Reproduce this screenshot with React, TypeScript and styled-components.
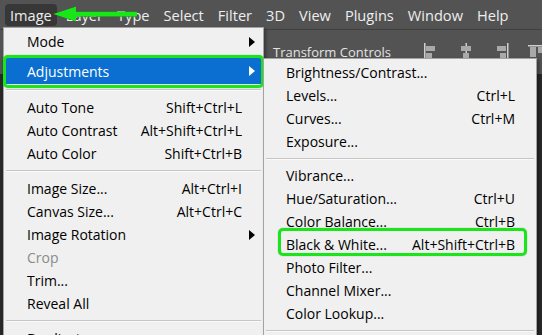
import React from "react";
import styled, { createGlobalStyle } from "styled-components";

const GlobalStyle = createGlobalStyle`
  html, body {
    margin: 0;
    padding: 0;
    background: #535353;
  }
  body {
    font-family: "Open Sans", "Noto Sans", sans-serif;
  }
`;

const GREEN = "#19e619";

const Screen = styled.div`
  position: relative;
  width: 542px;
  height: 335px;
  overflow: hidden;
  background: #535353;
  display: flex;
  flex-direction: column;
`;

const MenuBar = styled.div`
  height: 30px;
  box-sizing: border-box;
  display: flex;
  align-items: center;
  padding-left: 5px;
  gap: 4px;
  border-bottom: 1px solid #404040;
`;

const MenuTitle = styled.div<{ $active?: boolean }>`
  height: 22px;
  line-height: 22px;
  padding: 0 5px;
  border-radius: 4px;
  color: #eeeeee;
  font-size: 14.6px;
  background: ${({ $active }) => ($active ? "#373737" : "transparent")};
`;

const OptionsBar = styled.div`
  height: 44px;
  display: flex;
  align-items: center;
  padding-left: 273px;
  color: #e4e4e4;
  font-size: 13px;
  white-space: nowrap;
`;

const Divider = styled.div`
  width: 1px;
  height: 24px;
  background: #3a3a3a;
  margin: 0 20px 0 12px;
`;

const AlignIcons = styled.div`
  display: flex;
  gap: 19px;
`;

const Workspace = styled.div`
  flex: 1;
  background: #282828;
`;

const Menu = styled.div<{ $left: number; $top: number; $width: number }>`
  position: absolute;
  left: ${({ $left }) => $left}px;
  top: ${({ $top }) => $top}px;
  width: ${({ $width }) => $width}px;
  background: #f0f0f0;
  border: 1px solid #a3a3a3;
  padding: 2px 0;
  box-shadow: 2px 2px 3px rgba(0, 0, 0, 0.35);
  font-size: 14px;
  color: #000;
`;

const Item = styled.div<{
  $selected?: boolean;
  $disabled?: boolean;
  $tall?: boolean;
  $indent: number;
}>`
  position: relative;
  height: ${({ $tall }) => ($tall ? 26 : 23)}px;
  margin: 0 2px;
  display: flex;
  align-items: center;
  padding: 0 6px 0 ${({ $indent }) => $indent}px;
  color: ${({ $selected, $disabled }) =>
    $selected ? "#fff" : $disabled ? "#8b8b8b" : "#000"};
  background: ${({ $selected }) => ($selected ? "#0a6fd0" : "transparent")};
`;

const Label = styled.span`
  flex: 1;
  white-space: nowrap;
`;

const Shortcut = styled.span`
  white-space: nowrap;
`;

const ArrowSlot = styled.span`
  width: 13px;
  display: flex;
  justify-content: flex-end;
`;

const SubArrow = styled.span<{ $light?: boolean }>`
  width: 0;
  height: 0;
  border-top: 5px solid transparent;
  border-bottom: 5px solid transparent;
  border-left: 6px solid ${({ $light }) => ($light ? "#fff" : "#000")};
`;

const Separator = styled.div<{ $gap: number }>`
  height: ${({ $gap }) => $gap}px;
  margin: 0 2px;
  display: flex;
  align-items: center;
  &::before {
    content: "";
    flex: 1;
    height: 1px;
    background: #c6c6c6;
    border-bottom: 1px solid #fafafa;
  }
`;

const Highlight = styled.div<{ $t: number; $r: number; $b: number; $l: number }>`
  position: absolute;
  top: ${({ $t }) => $t}px;
  right: ${({ $r }) => $r}px;
  bottom: ${({ $b }) => $b}px;
  left: ${({ $l }) => $l}px;
  border: 3px solid ${GREEN};
  border-radius: 5px;
  box-shadow: 0 0 1px rgba(0, 0, 0, 0.5);
  pointer-events: none;
`;

const PointerArrow = styled.svg`
  position: absolute;
  left: 50px;
  top: 4px;
  filter: drop-shadow(0 0 0.6px rgba(0, 0, 0, 0.7));
`;

type Entry =
  | { sep: number }
  | {
      label: string;
      key?: string;
      sub?: boolean;
      disabled?: boolean;
      selected?: boolean;
      tall?: boolean;
      mark?: [number, number, number, number];
    };

const imageMenu: Entry[] = [
  { label: "Mode", sub: true },
  { sep: 5 },
  { label: "Adjustments", sub: true, selected: true, tall: true, mark: [-3, -3, -4, -3] },
  { sep: 12 },
  { label: "Auto Tone", key: "Shift+Ctrl+L" },
  { label: "Auto Contrast", key: "Alt+Shift+Ctrl+L" },
  { label: "Auto Color", key: "Shift+Ctrl+B" },
  { sep: 12 },
  { label: "Image Size...", key: "Alt+Ctrl+I" },
  { label: "Canvas Size...", key: "Alt+Ctrl+C" },
  { label: "Image Rotation", sub: true },
  { label: "Crop", disabled: true },
  { label: "Trim..." },
  { label: "Reveal All" },
  { sep: 12 },
  { label: "Duplicate..." },
];

const adjustMenu: Entry[] = [
  { label: "Brightness/Contrast..." },
  { label: "Levels...", key: "Ctrl+L" },
  { label: "Curves...", key: "Ctrl+M" },
  { label: "Exposure..." },
  { sep: 11 },
  { label: "Vibrance..." },
  { label: "Hue/Saturation...", key: "Ctrl+U" },
  { label: "Color Balance...", key: "Ctrl+B" },
  { label: "Black & White...", key: "Alt+Shift+Ctrl+B", mark: [-5, 7, 0, 12] },
  { label: "Photo Filter..." },
  { label: "Channel Mixer..." },
  { label: "Color Lookup..." },
  { sep: 11 },
];

const MenuList = ({ entries, indent }: { entries: Entry[]; indent: number }) => (
  <>
    {entries.map((e, i) =>
      "sep" in e ? (
        <Separator key={i} $gap={e.sep} />
      ) : (
        <Item
          key={i}
          $indent={indent}
          $selected={e.selected}
          $disabled={e.disabled}
          $tall={e.tall}
        >
          <Label>{e.label}</Label>
          {e.key && <Shortcut>{e.key}</Shortcut>}
          <ArrowSlot>{e.sub && <SubArrow $light={e.selected} />}</ArrowSlot>
          {e.mark && (
            <Highlight $t={e.mark[0]} $r={e.mark[1]} $b={e.mark[2]} $l={e.mark[3]} />
          )}
        </Item>
      )
    )}
  </>
);

const AlignIcon = ({ kind }: { kind: "left" | "center" | "right" | "top" }) => {
  const bar = "#a9a9a9";
  const line = "#cfcfcf";
  if (kind === "top")
    return (
      <svg width="18" height="16" viewBox="0 0 18 16">
        <rect x="0" y="2" width="18" height="1.5" fill={line} />
        <rect x="2" y="4" width="6" height="10" fill={bar} />
        <rect x="10" y="4" width="6" height="6" fill={bar} />
      </svg>
    );
  const x = kind === "left" ? 1 : kind === "center" ? 7.5 : 14;
  return (
    <svg width="16" height="18" viewBox="0 0 16 18">
      <rect x={x} y="0" width="1.5" height="18" fill={line} />
      {kind === "left" && (
        <>
          <rect x="3" y="3" width="9" height="5" fill={bar} />
          <rect x="3" y="10" width="6" height="5" fill={bar} />
        </>
      )}
      {kind === "center" && (
        <>
          <rect x="3" y="3" width="10" height="5" fill={bar} />
          <rect x="5" y="10" width="6" height="5" fill={bar} />
        </>
      )}
      {kind === "right" && (
        <>
          <rect x="4" y="3" width="9" height="5" fill={bar} />
          <rect x="7" y="10" width="6" height="5" fill={bar} />
        </>
      )}
    </svg>
  );
};

const titles = ["Image", "Layer", "Type", "Select", "Filter", "3D", "View", "Plugins", "Window", "Help"];

const App = () => {
  return (
    <Screen>
      <GlobalStyle />
      <MenuBar>
        {titles.map((t, i) => (
          <MenuTitle key={t} $active={i === 0}>
            {t}
          </MenuTitle>
        ))}
      </MenuBar>
      <OptionsBar>
        Transform Controls
        <Divider />
        <AlignIcons>
          <AlignIcon kind="left" />
          <AlignIcon kind="center" />
          <AlignIcon kind="right" />
          <AlignIcon kind="top" />
        </AlignIcons>
      </OptionsBar>
      <Workspace />

      <Menu $left={3} $top={27} $width={259}>
        <MenuList entries={imageMenu} indent={21} />
      </Menu>
      <Menu $left={263} $top={58} $width={272}>
        <MenuList entries={adjustMenu} indent={20} />
      </Menu>

      <PointerArrow width="92" height="22" viewBox="0 0 92 22">
        <polygon points="3,10 26,2.5 26,17.5" fill={GREEN} />
        <rect x="22" y="7.6" width="65" height="5" fill={GREEN} />
      </PointerArrow>
    </Screen>
  );
};

export default App;
